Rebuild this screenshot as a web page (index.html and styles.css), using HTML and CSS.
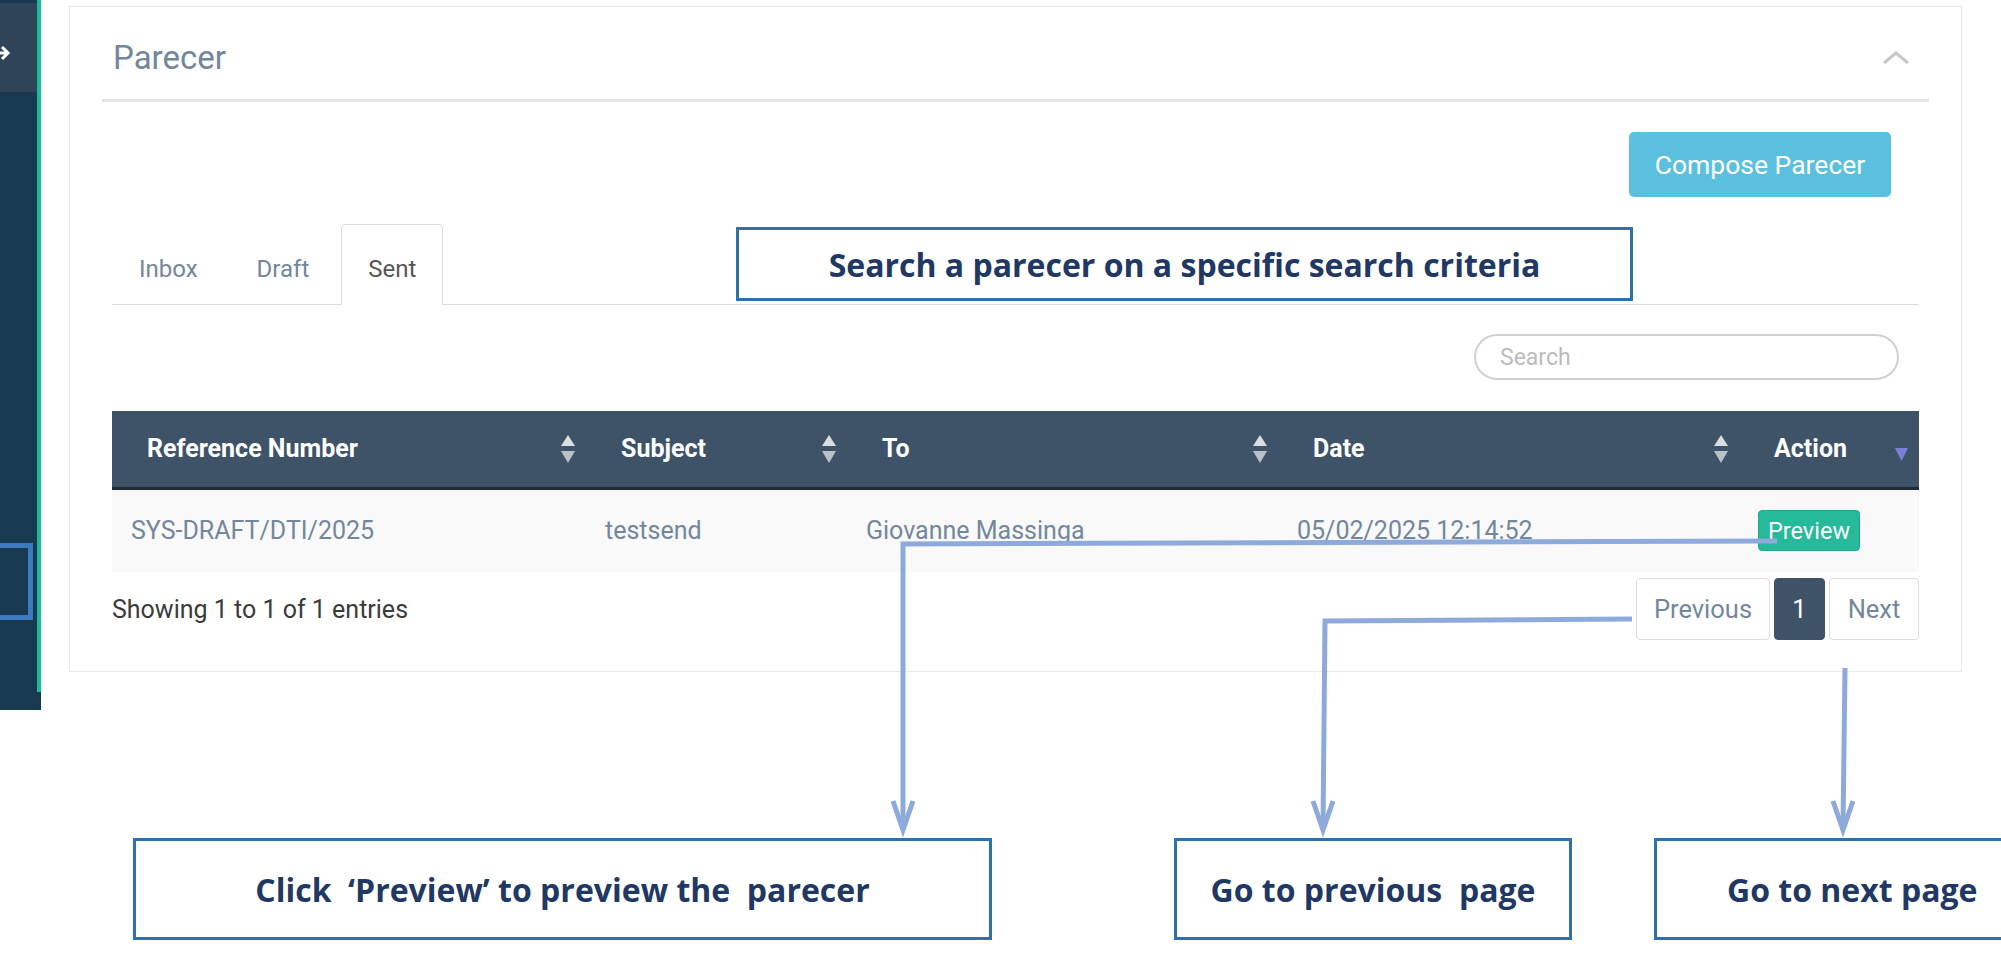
FILE: index.html
```html
<!DOCTYPE html>
<html lang="en">
<head>
<meta charset="utf-8">
<title>Parecer</title>
<link rel="stylesheet" href="styles.css">
</head>
<body>
<div class="page">
  <aside class="sidebar">
    <div class="side-main">
      <div class="side-top">
        <svg class="side-arrow" width="20" height="20" viewBox="0 0 20 20"><path d="M-4 10 H14 M8 4 L14 10 L8 16" fill="none" stroke="#fff" stroke-width="3"/></svg>
      </div>
      <div class="side-body"></div>
    </div>
    <div class="side-foot"></div>
  </aside>

  <main class="content">
    <section class="card">
      <header class="card-head">
        <h2 class="card-title">Parecer</h2>
        <svg class="chevron" width="28" height="14" viewBox="0 0 28 14"><polyline points="2,12 14,2 26,12" fill="none" stroke="#c8c8c8" stroke-width="3"/></svg>
      </header>
      <div class="card-body">
        <div class="toolbar">
          <button class="btn-compose">Compose Parecer</button>
        </div>
        <ul class="tabs">
          <li class="tab">Inbox</li>
          <li class="tab">Draft</li>
          <li class="tab tab-active">Sent</li>
        </ul>
        <div class="search-row">
          <input class="search" type="text" placeholder="Search">
        </div>
        <table class="grid">
          <colgroup>
            <col class="c1"><col class="c2"><col class="c3"><col class="c4"><col class="c5">
          </colgroup>
          <thead>
            <tr>
              <th><div class="th-in"><span>Reference Number</span><svg class="sort" width="14" height="30" viewBox="0 0 14 30"><path d="M0 12 L7 1 L14 12 Z" fill="#d9dde2"/><path d="M0 17 L14 17 L7 29 Z" fill="#b9c0c8"/></svg></div></th>
              <th><div class="th-in"><span>Subject</span><svg class="sort" width="14" height="30" viewBox="0 0 14 30"><path d="M0 12 L7 1 L14 12 Z" fill="#d9dde2"/><path d="M0 17 L14 17 L7 29 Z" fill="#b9c0c8"/></svg></div></th>
              <th><div class="th-in"><span>To</span><svg class="sort" width="14" height="30" viewBox="0 0 14 30"><path d="M0 12 L7 1 L14 12 Z" fill="#d9dde2"/><path d="M0 17 L14 17 L7 29 Z" fill="#b9c0c8"/></svg></div></th>
              <th><div class="th-in"><span>Date</span><svg class="sort" width="14" height="30" viewBox="0 0 14 30"><path d="M0 12 L7 1 L14 12 Z" fill="#d9dde2"/><path d="M0 17 L14 17 L7 29 Z" fill="#b9c0c8"/></svg></div></th>
              <th><div class="th-in"><span>Action</span><svg class="sort-desc" width="13" height="13" viewBox="0 0 13 13"><path d="M0 0 L13 0 L6.5 13 Z" fill="#7c7fd8"/></svg></div></th>
            </tr>
          </thead>
          <tbody>
            <tr>
              <td>SYS-DRAFT/DTI/2025</td>
              <td>testsend</td>
              <td>Giovanne Massinga</td>
              <td>05/02/2025 12:14:52</td>
              <td><button class="btn-preview">Preview</button></td>
            </tr>
          </tbody>
        </table>
        <div class="table-foot">
          <span class="info">Showing 1 to 1 of 1 entries</span>
          <nav class="pager">
            <span class="pg pg-prev">Previous</span>
            <span class="pg pg-active">1</span>
            <span class="pg pg-next">Next</span>
          </nav>
        </div>
      </div>
    </section>
  </main>

  <div class="callout callout-side"></div>
  <div class="callout callout-search">Search a parecer on a specific search criteria</div>
  <div class="callout callout-preview">Click&nbsp; ‘Preview’ to preview the&nbsp; parecer</div>
  <div class="callout callout-prev">Go to previous&nbsp; page</div>
  <div class="callout callout-next">Go to next page</div>

  <svg class="arrows" width="2001" height="957" viewBox="0 0 2001 957">
    <g fill="none" stroke="#8eaadb" stroke-width="5" stroke-linejoin="miter">
      <polyline points="1777,541 903,544 903,828"/>
      <polyline points="893,801 903,830 913,801"/>
      <polyline points="1632,619 1325,621 1323,828"/>
      <polyline points="1313,801 1323,830 1333,801"/>
      <polyline points="1845,668 1843,828"/>
      <polyline points="1833,801 1843,830 1853,801"/>
    </g>
  </svg>
</div>
</body>
</html>
```
FILE: styles.css
```css
* { box-sizing: border-box; }
html, body { margin: 0; padding: 0; background: #fff; }
body { font-family: Roboto, "Liberation Sans", sans-serif; }

.page {
  position: relative;
  width: 2001px;
  height: 957px;
  overflow: hidden;
  display: flex;
  align-items: flex-start;
}

/* sidebar */
.sidebar {
  width: 41px;
  flex-shrink: 0;
  display: flex;
  flex-direction: column;
  background: #183a51;
}
.side-main {
  height: 692px;
  display: flex;
  flex-direction: column;
  border-right: 4px solid #1abb9c;
}
.side-top {
  height: 93px;
  border-top: 3px solid #183a51;
  border-bottom: 1px solid #22384c;
  background: #2f4459;
  position: relative;
  overflow: hidden;
}
.side-arrow { position: absolute; left: -6px; top: 40px; }
.side-body { flex: 1; background: #183a51; }
.side-foot { height: 18px; background: #183a51; }

/* content */
.content {
  margin-left: 28px;
  padding-top: 6px;
  width: 1893px;
}
.card {
  border: 1px solid #e6e9ed;
  background: #fff;
  padding: 0 32px 31px;
}
.card-head {
  display: flex;
  align-items: flex-start;
  height: 95px;
  padding: 31px 11px 0;
  border-bottom: 3px solid #e6e6e6;
}
.card-title {
  margin: 0;
  font-size: 33px;
  line-height: 40px;
  font-weight: 400;
  color: #73879c;
}
.chevron { margin: 13px 8px 0 auto; }

.card-body { padding: 0 10px; }

.toolbar {
  display: flex;
  justify-content: flex-end;
  margin-top: 30px;
  padding-right: 28px;
}
.btn-compose {
  width: 262px;
  height: 65px;
  padding: 0;
  border: none;
  border-radius: 5px;
  background: #5bc0de;
  color: #fff;
  font-family: Roboto, sans-serif;
  font-size: 26.5px;
}

.tabs {
  list-style: none;
  margin: 27px 0 0;
  padding: 0;
  display: flex;
  gap: 5px;
  border-bottom: 1px solid #dcdcdc;
}
.tab {
  border: 1px solid transparent;
  border-bottom: 0;
  border-radius: 5px 5px 0 0;
  padding: 9px 26px 0;
  line-height: 70px;
  font-size: 24px;
  color: #73879c;
  margin-bottom: -1px;
}
.tab-active {
  border-color: #dcdcdc;
  background: #fff;
  color: #555;
  padding-bottom: 1px;
}

.search-row {
  display: flex;
  justify-content: flex-end;
  margin-top: 29px;
  padding-right: 20px;
}
.search {
  width: 425px;
  height: 46px;
  border: 2px solid #d0d0d0;
  border-radius: 23px;
  padding: 0 24px;
  font-family: Roboto, sans-serif;
  font-size: 23px;
  color: #555;
  outline: none;
}
.search::placeholder { color: #bcbcbc; }

.grid {
  margin-top: 31px;
  width: 100%;
  border-collapse: collapse;
  table-layout: fixed;
}
.c1 { width: 474px; }
.c2 { width: 261px; }
.c3 { width: 431px; }
.c4 { width: 461px; }
.c5 { width: 180px; }
.grid th {
  height: 77px;
  padding: 0;
  background: #3e5367;
  border-bottom: 3px solid #1f2b37;
  color: #fff;
  font-size: 25px;
  font-weight: 700;
  text-align: left;
}
.th-in {
  display: flex;
  align-items: center;
  justify-content: space-between;
  padding: 0 11px 0 35px;
}
.sort-desc { margin-top: 12px; }
.grid td {
  height: 84px;
  padding: 0 0 0 19px;
  background: #f9f9f9;
  color: #73879c;
  font-size: 25px;
}
.btn-preview {
  width: 102px;
  height: 41px;
  padding: 0;
  border: 1px solid #1fa98b;
  border-radius: 4px;
  background: #26b99a;
  color: #fff;
  font-family: Roboto, sans-serif;
  font-size: 23.5px;
}

.table-foot {
  margin-top: 6px;
  display: flex;
  justify-content: space-between;
  align-items: center;
}
.info { font-size: 25px; color: #3b3b3b; }
.pager { display: flex; gap: 4px; }
.pg {
  height: 62px;
  line-height: 60px;
  border: 1px solid #dddddd;
  border-radius: 4px;
  font-size: 25.5px;
  color: #73879c;
  text-align: center;
}
.pg-prev { width: 134px; }
.pg-active { width: 51px; background: #3e5367; border-color: #3e5367; color: #fff; }
.pg-next { width: 90px; }

/* annotation callouts */
.callout {
  position: absolute;
  display: flex;
  align-items: center;
  justify-content: center;
  border: 3px solid #3070ab;
  background: #fff;
  color: #1f3864;
  font-family: "Open Sans", "Noto Sans", sans-serif;
  font-weight: 700;
  font-size: 32px;
  white-space: nowrap;
}
.callout-side { left: -100px; top: 543px; width: 133px; height: 77px; border: 5px solid #3b79c0; background: transparent; }
.callout-search { left: 736px; top: 227px; width: 897px; height: 74px; }
.callout-preview { left: 133px; top: 838px; width: 859px; height: 102px; }
.callout-prev { left: 1174px; top: 838px; width: 398px; height: 102px; }
.callout-next { left: 1654px; top: 838px; width: 380px; height: 102px; justify-content: flex-start; padding-left: 70px; }

.arrows { position: absolute; left: 0; top: 0; pointer-events: none; }
```
